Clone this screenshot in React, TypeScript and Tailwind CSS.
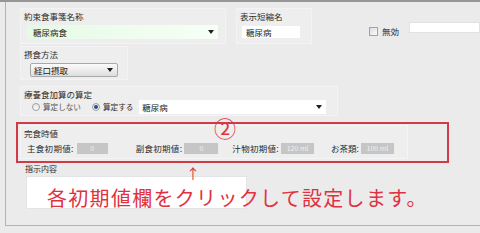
import React from 'react'

const jp = { fontFamily: '"Noto Sans CJK JP", "Noto Sans", sans-serif' }

const DropArrow = () => (
  <svg width="6" height="4" viewBox="0 0 6 4">
    <path d="M0 0h6L3 4z" fill="#1f1f1f" />
  </svg>
)

const Radio = ({ checked }: { checked?: boolean }) => (
  <span className="flex h-[8px] w-[8px] items-center justify-center rounded-full border border-[#9aa0a6] bg-gradient-to-b from-[#e4e4e4] to-[#fafafa]">
    {checked && <span className="h-[4px] w-[4px] rounded-full bg-[#2a4f8a]" />}
  </span>
)

const ValueBox = ({ w, text }: { w: string; text: string }) => (
  <span
    className={`flex h-[11px] items-center justify-center bg-[#c6c6c6] text-[7px] leading-none text-[#f2f2f2] ${w}`}
  >
    {text}
  </span>
)

export default function App() {
  return (
    <div
      className="relative h-[233px] w-[480px] overflow-hidden whitespace-nowrap bg-[#ebebeb] text-[8.5px] leading-[12px] text-[#2b2b2b]"
      style={jp}
    >
      <div className="h-[2px] bg-[#979797]" />
      <div className="ml-[5px] h-[224px] border-b border-l border-[#b4b4b4]">
        {/* row 1 */}
        <div className="flex items-start">
          <div className="ml-[14px] mt-[6px] h-[36px] w-[206px] border border-[#f3f3f3] bg-[#eeeeee]">
            <div className="pl-[3px] pt-[1px]">約束食事箋名称</div>
            <div className="ml-[6px] mt-[3px] flex h-[14px] w-[191px] items-center justify-between bg-gradient-to-r from-[#e5fae5] to-[#f7fff7] pl-[6px] pr-[4px] text-[#222]">
              <span>糖尿病食</span>
              <DropArrow />
            </div>
          </div>
          <div className="ml-[10px] mt-[6px] h-[36px] w-[76px] border border-[#f3f3f3] bg-[#eeeeee]">
            <div className="pl-[3px] pt-[1px]">表示短縮名</div>
            <div className="ml-[5px] mt-[4px] flex h-[12px] w-[58px] items-center bg-white pl-[4px] text-[#222]">
              糖尿病
            </div>
          </div>
          <div className="ml-[57px] mt-[23px] flex items-center gap-[4px]">
            <span className="h-[9px] w-[9px] border border-[#a4a4a4] bg-gradient-to-br from-[#dcdcdc] to-[#fbfbfb]" />
            <span>無効</span>
          </div>
          <div className="ml-[10px] mt-[20px] h-[11px] flex-1 border border-[#e2e2e2] bg-white" />
        </div>

        {/* row 2 */}
        <div className="ml-[14px] mt-[2px] h-[34px] w-[108px] border border-[#f3f3f3] bg-[#eeeeee]">
          <div className="pl-[3px] pt-[1px]">摂食方法</div>
          <div className="ml-[9px] mt-[3px] flex h-[14px] w-[88px] items-center justify-between rounded-[2px] border border-[#a9a9a9] bg-gradient-to-b from-[#fbfbfb] to-[#dedede] pl-[3px] pr-[4px] text-[#222]">
            <span>経口摂取</span>
            <DropArrow />
          </div>
        </div>

        {/* row 3 */}
        <div className="ml-[14px] mt-[6px] h-[30px] w-[318px] border border-[#f3f3f3] bg-[#eeeeee]">
          <div className="pl-[3px] pt-[1px]">療養食加算の算定</div>
          <div className="flex items-center text-[7.6px]">
            <span className="ml-[11px]">
              <Radio />
            </span>
            <span className="ml-[3px] text-[#555]">算定しない</span>
            <span className="ml-[11px]">
              <Radio checked />
            </span>
            <span className="ml-[3px]">算定する</span>
            <div className="ml-[6px] flex h-[14px] w-[187px] items-center justify-between bg-white pl-[3px] pr-[4px] text-[8.5px] text-[#222]">
              <span>糖尿病</span>
              <DropArrow />
            </div>
          </div>
        </div>

        {/* row 4: 完食時値 */}
        <div className="ml-[10px] mt-[6px] h-[41px] w-[433px] border-2 border-[#d33a48] bg-[#ececec] pl-[2px] pt-px">
          <div className="h-[34px] w-[388px] border border-[#f5f5f5] bg-[#eeeeee]">
            <div className="pl-[3px] pt-[1px]">完食時値</div>
            <div className="mt-[3px] flex items-center">
              <span className="ml-[6px] tracking-[0.3px]">主食初期値:</span>
              <span className="ml-[3px]">
                <ValueBox w="w-[31px]" text="0" />
              </span>
              <span className="ml-[28px] tracking-[0.3px]">副食初期値:</span>
              <span className="ml-[2px]">
                <ValueBox w="w-[34px]" text="0" />
              </span>
              <span className="ml-[14px] tracking-[0.3px]">汁物初期値:</span>
              <span className="ml-[2px]">
                <ValueBox w="w-[33px]" text="120 ml" />
              </span>
              <span className="ml-[17px]">お茶類:</span>
              <span className="ml-[2px]">
                <ValueBox w="w-[33px]" text="100 ml" />
              </span>
            </div>
          </div>
        </div>

        {/* row 5: 指示内容 */}
        <div className="ml-[14px] h-[50px] w-[240px]">
          <div className="pl-[5px] text-[8px] leading-[11px]">指示内容</div>
          <div className="ml-[6px] mt-[2px] h-[33px] w-[221px] border border-[#e4e4e4] bg-white" />
        </div>
      </div>

      {/* annotations */}
      <div className="absolute left-[214px] top-[115px] text-[22px] leading-[24px] text-[#de3442]">②</div>
      <div className="absolute left-[186px] top-[164px] text-[14px] leading-[18px] text-[#de3442]">↑</div>
      <div className="absolute left-[47px] top-[184px] text-[20px] leading-[28px] tracking-[1.3px] text-[#e0313f]">
        各初期値欄をクリックして設定します。
      </div>
    </div>
  )
}
